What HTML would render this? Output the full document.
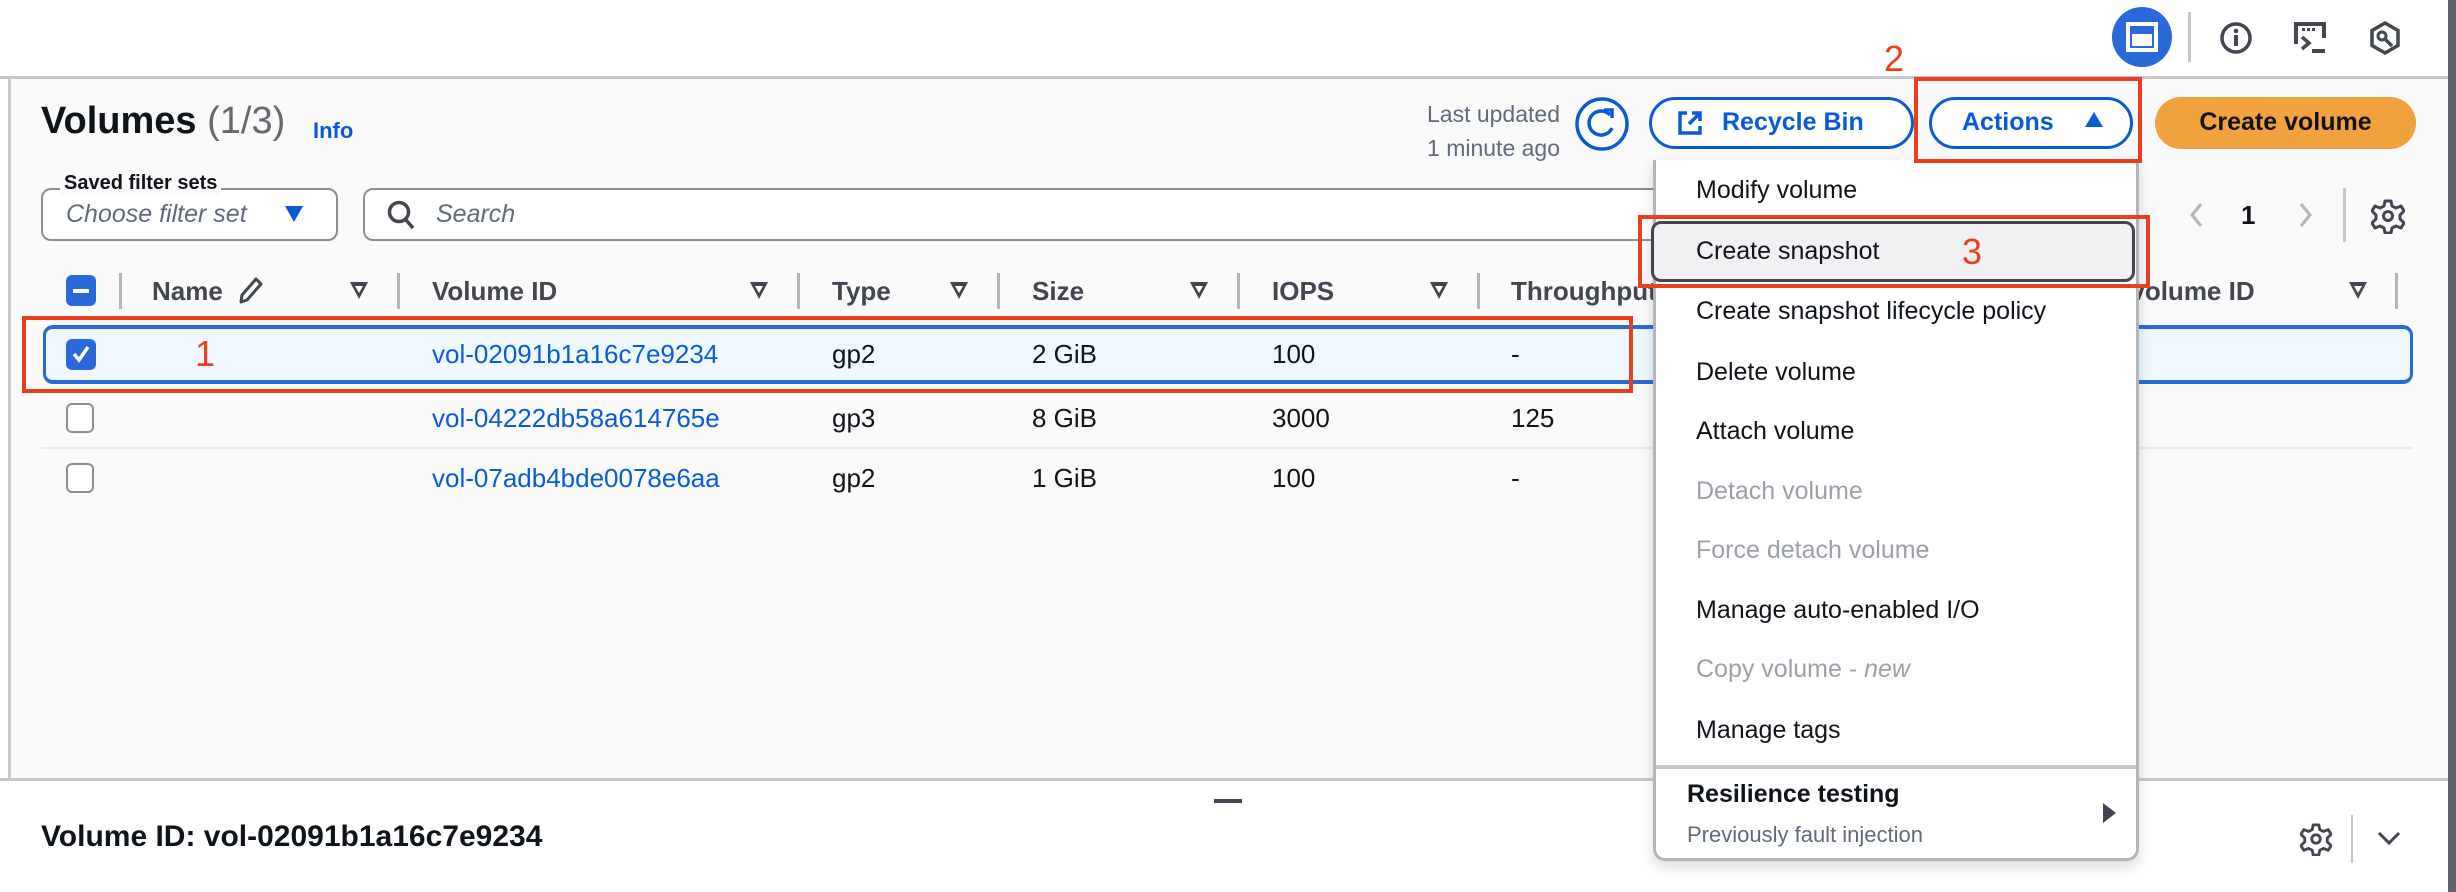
<!DOCTYPE html>
<html><head><meta charset="utf-8"><style>
*{margin:0;padding:0;box-sizing:border-box}
body{width:2456px;height:892px;position:relative;overflow:hidden;background:#fff;font-family:"Liberation Sans",sans-serif;color:#0f141a}
.a{position:absolute;white-space:nowrap}
.hdr{font-size:26px;font-weight:bold;color:#424650}
.cell{font-size:26px;color:#0f141a}
.lnk{color:#0a5ad6}
.div{position:absolute;width:3px;height:36px;background:#b4b4bb;top:273px}
.tri{position:absolute;top:282px;width:0;height:0;border-left:9px solid transparent;border-right:9px solid transparent;border-top:17px solid #424650}
.tri::after{content:"";position:absolute;left:-4px;top:-13px;border-left:4px solid transparent;border-right:4px solid transparent;border-top:7px solid #fff}
.cb{position:absolute;width:28px;height:30px;border:2.5px solid #8c8c94;border-radius:6px;background:#fff}
.mi{position:absolute;left:1696px;font-size:25px;color:#0f141a}
.dis{color:#9ba0a8}
.red{position:absolute;border:4px solid #e8401f}
.rn{position:absolute;color:#e8401f;font-size:36px}
</style></head><body>
<div class="a" style="left:0;top:76px;width:2456px;height:3px;background:#c6c6cd"></div>
<div class="a" style="left:2448px;top:0;width:8px;height:892px;background:#5f6268"></div>
<div class="a" style="left:2112px;top:7px;width:60px;height:60px;border-radius:50%;background:#2a6ad8"></div>
<div class="a" style="left:2126px;top:22px;width:32px;height:30px;border:4px solid #fff;"></div>
<div class="a" style="left:2132px;top:34px;width:20px;height:12px;background:#fff"></div>
<div class="a" style="left:2188px;top:12px;width:3px;height:50px;background:#c6c6cd"></div>
<svg class="a" style="left:2218px;top:20px" width="36" height="36" viewBox="0 0 36 36"><circle cx="18" cy="18" r="14" fill="none" stroke="#424650" stroke-width="3.5"/><rect x="16" y="15" width="4" height="11" fill="#424650"/><circle cx="18" cy="11" r="2.3" fill="#424650"/></svg>
<svg class="a" style="left:2292px;top:20px" width="38" height="36" viewBox="0 0 38 36"><path d="M4 24V4h28v14" fill="none" stroke="#424650" stroke-width="4"/><rect x="10" y="8" width="3" height="3" fill="#424650"/><rect x="15" y="8" width="3" height="3" fill="#424650"/><rect x="20" y="8" width="3" height="3" fill="#424650"/><path d="M10 17l7 6-7 6" fill="none" stroke="#424650" stroke-width="3.5"/><rect x="20" y="29" width="13" height="4" fill="#424650"/></svg>
<svg class="a" style="left:2368px;top:20px" width="34" height="36" viewBox="0 0 34 36"><path d="M17 3l13 7.5v15L17 33 4 25.5v-15z" fill="none" stroke="#424650" stroke-width="3.5"/><circle cx="14" cy="16" r="4" fill="none" stroke="#424650" stroke-width="3"/><path d="M17 19l7 7" stroke="#424650" stroke-width="3.5"/></svg>
<div class="a" style="left:8px;top:79px;width:2440px;height:699px;background:#fafafa;border-left:3px solid #c6c6cd"></div>
<div class="a" style="left:0;top:778px;width:2448px;height:3px;background:#c6c6cd"></div>
<div class="a" style="left:1214px;top:799px;width:28px;height:4px;background:#424650"></div>
<div class="a" style="left:41px;top:100px;font-size:38px;font-weight:bold">Volumes <span style="font-weight:normal;color:#656871">(1/3)</span></div>
<div class="a lnk" style="left:313px;top:118px;font-size:22px;font-weight:bold">Info</div>
<div class="a" style="left:1390px;top:97px;font-size:23px;color:#5f6b7a;text-align:right;width:170px;line-height:34px">Last updated<br>1 minute ago</div>
<svg class="a" style="left:1574px;top:96px" width="56" height="56" viewBox="0 0 56 56"><circle cx="28" cy="28" r="25" fill="#fff" stroke="#0a5ad6" stroke-width="3.5"/><path d="M36 19a12 12 0 1 0 2 13" fill="none" stroke="#0a5ad6" stroke-width="3.5"/><path d="M30 14h8v8" fill="none" stroke="#0a5ad6" stroke-width="3.5"/></svg>
<div class="a" style="left:1649px;top:97px;width:265px;height:52px;border:3px solid #0a5ad6;border-radius:26px;background:#fff"></div>
<svg class="a" style="left:1676px;top:109px" width="28" height="28" viewBox="0 0 28 28"><path d="M11 4H4v20h20v-7M16 4h8v8M24 4L13 15" fill="none" stroke="#0a5ad6" stroke-width="3.5"/></svg>
<div class="a lnk" style="left:1722px;top:108px;font-size:25px;font-weight:bold">Recycle Bin</div>
<div class="a" style="left:1929px;top:97px;width:204px;height:52px;border:3px solid #0a5ad6;border-radius:26px;background:#fff"></div>
<div class="a lnk" style="left:1962px;top:108px;font-size:25px;font-weight:bold">Actions</div>
<div class="a" style="left:2085px;top:112px;border-left:9px solid transparent;border-right:9px solid transparent;border-bottom:15px solid #0a5ad6"></div>
<div class="a" style="left:2155px;top:97px;width:261px;height:52px;border-radius:26px;background:#f2a13f"></div>
<div class="a" style="left:2155px;top:108px;width:261px;text-align:center;font-size:25px;font-weight:bold">Create volume</div>
<div class="a" style="left:41px;top:188px;width:297px;height:53px;border:2.5px solid #8c8c94;border-radius:10px;background:#fff"></div>
<div class="a" style="left:60px;top:171px;font-size:20px;font-weight:bold;background:#fafafa;padding:0 4px;line-height:24px">Saved filter sets</div>
<div class="a" style="left:66px;top:200px;font-size:25px;font-style:italic;color:#5f6b7a">Choose filter set</div>
<div class="a" style="left:285px;top:206px;border-left:9px solid transparent;border-right:9px solid transparent;border-top:16px solid #0a5ad6"></div>
<div class="a" style="left:363px;top:188px;width:1300px;height:53px;border:2.5px solid #8c8c94;border-radius:10px;background:#fff"></div>
<svg class="a" style="left:386px;top:199px" width="30" height="32" viewBox="0 0 30 32"><circle cx="13" cy="13" r="9.5" fill="none" stroke="#424650" stroke-width="3.5"/><path d="M20 21l7 8" stroke="#424650" stroke-width="3.5"/></svg>
<div class="a" style="left:436px;top:200px;font-size:25px;font-style:italic;color:#5f6b7a">Search</div>
<svg class="a" style="left:2187px;top:200px" width="20" height="30" viewBox="0 0 20 30"><path d="M14 4L5 15l9 11" fill="none" stroke="#b4b4bb" stroke-width="3"/></svg>
<div class="a" style="left:2241px;top:200px;font-size:26px;font-weight:bold">1</div>
<svg class="a" style="left:2295px;top:200px" width="20" height="30" viewBox="0 0 20 30"><path d="M6 4l9 11-9 11" fill="none" stroke="#b4b4bb" stroke-width="3"/></svg>
<div class="a" style="left:2343px;top:188px;width:3px;height:54px;background:#c6c6cd"></div>
<svg class="a" style="left:2371px;top:198px" width="34" height="36" viewBox="0 0 34 36"><path d="M14 3h6l1 5 4 2 5-2 3 5-4 4v4l4 4-3 5-5-2-4 2-1 5h-6l-1-5-4-2-5 2-3-5 4-4v-4l-4-4 3-5 5 2 4-2z" fill="none" stroke="#424650" stroke-width="3" stroke-linejoin="round"/><circle cx="17" cy="18" r="4.5" fill="none" stroke="#424650" stroke-width="3"/></svg>
<div class="a" style="left:66px;top:275px;width:30px;height:31px;border-radius:6px;background:#2a6ad8"></div>
<div class="a" style="left:73px;top:289px;width:16px;height:4px;background:#fff"></div>
<div class="div" style="left:119px"></div>
<div class="a hdr" style="left:152px;top:276px">Name</div>
<svg class="a" style="left:238px;top:276px" width="26" height="28" viewBox="0 0 26 28"><path d="M18 3l5 5L9 24l-6 2 1-7z" fill="none" stroke="#424650" stroke-width="3" stroke-linejoin="round"/></svg>
<div class="tri" style="left:350px"></div>
<div class="div" style="left:397px"></div>
<div class="a hdr" style="left:432px;top:276px">Volume ID</div>
<div class="tri" style="left:750px"></div>
<div class="div" style="left:797px"></div>
<div class="a hdr" style="left:832px;top:276px">Type</div>
<div class="tri" style="left:950px"></div>
<div class="div" style="left:997px"></div>
<div class="a hdr" style="left:1032px;top:276px">Size</div>
<div class="tri" style="left:1190px"></div>
<div class="div" style="left:1237px"></div>
<div class="a hdr" style="left:1272px;top:276px">IOPS</div>
<div class="tri" style="left:1430px"></div>
<div class="div" style="left:1477px"></div>
<div class="a hdr" style="left:1511px;top:276px">Throughput</div>
<div class="a hdr" style="left:2035px;top:276px">Source volume ID</div>
<div class="tri" style="left:2349px"></div>
<div class="div" style="left:2395px"></div>
<div class="a" style="left:43px;top:325px;width:2370px;height:59px;border:3px solid #2a6ad8;border-width:4px 3px;border-radius:10px;background:#f0f8ff"></div>
<div class="a" style="left:66px;top:339px;width:30px;height:31px;border-radius:6px;background:#2a6ad8"></div>
<svg class="a" style="left:69px;top:342px" width="24" height="24" viewBox="0 0 24 24"><path d="M5 12l5 6 9-13" fill="none" stroke="#fff" stroke-width="3.5"/></svg>
<div class="a cell lnk" style="left:432px;top:339px">vol-02091b1a16c7e9234</div>
<div class="a cell" style="left:832px;top:339px">gp2</div>
<div class="a cell" style="left:1032px;top:339px">2 GiB</div>
<div class="a cell" style="left:1272px;top:339px">100</div>
<div class="a cell" style="left:1511px;top:339px">-</div>
<div class="cb" style="left:66px;top:403px"></div>
<div class="a cell lnk" style="left:432px;top:403px">vol-04222db58a614765e</div>
<div class="a cell" style="left:832px;top:403px">gp3</div>
<div class="a cell" style="left:1032px;top:403px">8 GiB</div>
<div class="a cell" style="left:1272px;top:403px">3000</div>
<div class="a cell" style="left:1511px;top:403px">125</div>
<div class="a" style="left:41px;top:447px;width:2372px;height:2px;background:#e9ebed"></div>
<div class="cb" style="left:66px;top:463px"></div>
<div class="a cell lnk" style="left:432px;top:463px">vol-07adb4bde0078e6aa</div>
<div class="a cell" style="left:832px;top:463px">gp2</div>
<div class="a cell" style="left:1032px;top:463px">1 GiB</div>
<div class="a cell" style="left:1272px;top:463px">100</div>
<div class="a cell" style="left:1511px;top:463px">-</div>
<div class="a" style="left:41px;top:820px;font-size:30px;font-weight:bold">Volume ID: vol-02091b1a16c7e9234</div>
<svg class="a" style="left:2300px;top:822px" width="32" height="34" viewBox="0 0 34 36"><path d="M14 3h6l1 5 4 2 5-2 3 5-4 4v4l4 4-3 5-5-2-4 2-1 5h-6l-1-5-4-2-5 2-3-5 4-4v-4l-4-4 3-5 5 2 4-2z" fill="none" stroke="#424650" stroke-width="3" stroke-linejoin="round"/><circle cx="17" cy="18" r="4.5" fill="none" stroke="#424650" stroke-width="3"/></svg>
<div class="a" style="left:2351px;top:815px;width:2px;height:48px;background:#c6c6cd"></div>
<svg class="a" style="left:2376px;top:828px" width="26" height="20" viewBox="0 0 26 20"><path d="M3 5l10 10 10-10" fill="none" stroke="#424650" stroke-width="3"/></svg>
<div class="a" style="left:1653px;top:160px;width:486px;height:701px;background:#fff;border:3px solid #b4b4bb;border-top:none;border-radius:0 0 12px 12px;box-shadow:0 6px 14px rgba(0,0,0,.15)"></div>
<div class="mi" style="top:176px">Modify volume</div>
<div class="a" style="left:1651px;top:221px;width:484px;height:61px;border:3.5px solid #424650;border-radius:10px;background:#f1f1f4"></div>
<div class="mi" style="top:237px">Create snapshot</div>
<div class="mi" style="top:297px">Create snapshot lifecycle policy</div>
<div class="mi" style="top:358px">Delete volume</div>
<div class="mi" style="top:417px">Attach volume</div>
<div class="mi dis" style="top:477px">Detach volume</div>
<div class="mi dis" style="top:536px">Force detach volume</div>
<div class="mi" style="top:596px">Manage auto-enabled I/O</div>
<div class="mi dis" style="top:655px">Copy volume - <i>new</i></div>
<div class="mi" style="top:716px">Manage tags</div>
<div class="a" style="left:1656px;top:765px;width:480px;height:4px;background:#c6c6cd"></div>
<div class="a" style="left:1687px;top:780px;font-size:25px;font-weight:bold">Resilience testing</div>
<div class="a" style="left:1687px;top:822px;font-size:22px;color:#5f6b7a">Previously fault injection</div>
<div class="a" style="left:2103px;top:803px;border-top:10px solid transparent;border-bottom:10px solid transparent;border-left:13px solid #424650"></div>
<div class="red" style="left:22px;top:316px;width:1611px;height:77px"></div>
<div class="rn" style="left:195px;top:333px">1</div>
<div class="red" style="left:1914px;top:77px;width:228px;height:86px"></div>
<div class="rn" style="left:1884px;top:38px">2</div>
<div class="red" style="left:1638px;top:215px;width:512px;height:73px"></div>
<div class="rn" style="left:1962px;top:231px">3</div>
</body></html>
